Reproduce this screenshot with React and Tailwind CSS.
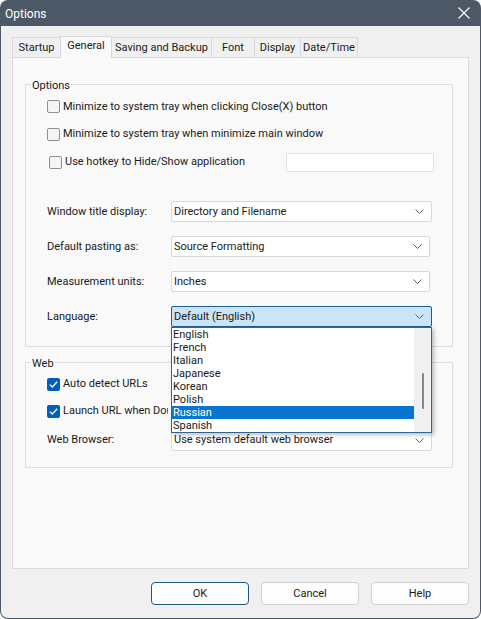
import React from "react"

const languages = ["English", "French", "Italian", "Japanese", "Korean", "Polish", "Russian", "Spanish"]

const tabs = [
    { name: "Startup", w: "w-[48px]" },
    { name: "General", w: "w-[51px]", active: true },
    { name: "Saving and Backup", w: "w-[100px]" },
    { name: "Font", w: "w-[43px]" },
    { name: "Display", w: "w-[46px]" },
    { name: "Date/Time", w: "w-[58px]", last: true },
]

function Chevron() {
    return (
        <svg width="9" height="5" viewBox="0 0 9 5" className="shrink-0">
            <path d="M0.5 0.5 L4.5 4.5 L8.5 0.5" fill="none" stroke="#606060" strokeWidth="1" />
        </svg>
    )
}

function Checkbox({ checked = false }) {
    if (checked) {
        return (
            <div className="w-[13px] h-[13px] rounded-[2px] bg-[#005fb8] flex items-center justify-center shrink-0">
                <svg width="9" height="7" viewBox="0 0 9 7">
                    <path d="M0.8 3.6 L3.3 6 L8.2 0.8" fill="none" stroke="white" strokeWidth="1.3" />
                </svg>
            </div>
        )
    }
    return <div className="w-[13px] h-[13px] rounded-[2px] border border-[#8f8f8f] bg-[#f4f4f4] shrink-0" />
}

function CheckRow({ label, checked, h, indent = "ml-[21px]", clip = "" }) {
    return (
        <div className={`${h} flex items-center ${indent}`}>
            <Checkbox checked={checked} />
            <span className={`ml-[3px] pt-px whitespace-nowrap ${clip}`}>{label}</span>
        </div>
    )
}

function Select({ value, w = "w-[261px]", active = false }) {
    return (
        <div className={`${w} h-[21px] flex items-center justify-between pl-[2px] pr-[7px] border rounded-[2px] ${active ? "bg-[#cce4f7] border-[#1c5e94]" : "bg-white border-[#d9d9d9]"}`}>
            <span className="pt-px">{value}</span>
            <Chevron />
        </div>
    )
}

function FieldRow({ label, h = "h-[35px]", children }) {
    return (
        <div className={`${h} flex items-center ml-[21px]`}>
            <span className="w-[124px] pt-px shrink-0">{label}</span>
            {children}
        </div>
    )
}

function Group({ title, className = "", children }) {
    return (
        <div className={`border border-[#dcdcdc] ml-[12px] mr-[15px] ${className}`}>
            <div className="-mt-[8px] ml-[5px] w-fit px-[1px] h-[16px] leading-[17px] bg-[#f9f9f9]">{title}</div>
            {children}
        </div>
    )
}

function LanguageList() {
    return (
        <div className="absolute left-0 top-full w-[261px] h-[106px] bg-white border border-[#2f6592] shadow-[2px_2px_4px_rgba(0,0,0,0.25)] flex z-10">
            <div className="flex-1 flex flex-col">
                {languages.map(lang => (
                    <div key={lang} className={`h-[13px] leading-[14px] pl-[1px] ${lang === "Russian" ? "bg-[#0a74d2] text-white" : ""}`}>
                        {lang}
                    </div>
                ))}
            </div>
            <div className="w-[17px] bg-[#f0f0f0] flex justify-center pt-[45px] pl-[1px]">
                <div className="w-[2px] h-[36px] rounded-full bg-[#858585]" />
            </div>
        </div>
    )
}

function Button({ name, focused = false }) {
    return (
        <div className={`w-[98px] h-[23px] pt-px flex items-center justify-center rounded-[4px] bg-[#fdfdfd] border ${focused ? "border-[#1b5a86]" : "border-[#d0d0d0]"}`}>
            {name}
        </div>
    )
}

export default function App() {
    return (
        <div className="w-[481px] h-[619px] bg-white font-['Roboto',sans-serif] text-[11px] text-[#1a1a1a]">
            <div className="w-full h-full rounded-[8px] overflow-hidden bg-[#4c5866] px-[1px] pb-[1px] flex flex-col">
                {/* title bar */}
                <div className="h-[26px] shrink-0 flex items-center justify-between pl-[4px] pr-[10px] text-white text-[12px]">
                    <span className="pt-px">Options</span>
                    <svg width="12" height="12" viewBox="0 0 12 12">
                        <path d="M0.5 0.5 L11.5 11.5 M11.5 0.5 L0.5 11.5" stroke="white" strokeWidth="1.1" />
                    </svg>
                </div>

                <div className="flex-1 bg-[#f0f0f0] rounded-b-[7px] pt-[10px] px-[11px]">
                    {/* tab strip */}
                    <div className="h-[22px] flex items-end -mb-px relative z-10">
                        {tabs.map(t => (
                            <div
                                key={t.name}
                                className={`${t.w} whitespace-nowrap flex items-center justify-center border-[#d9d9d9] border-t border-l ${t.last ? "border-r" : ""} ${t.active ? "h-[22px] bg-[#f9f9f9] pb-[2px]" : "h-[21px] bg-[#f0f0f0] border-b pt-[2px]"}`}
                            >
                                {t.name}
                            </div>
                        ))}
                    </div>

                    {/* general page */}
                    <div className="h-[512px] border border-[#dcdcdc] bg-[#f9f9f9] pt-[26px]">
                        <Group title="Options" className="pb-[12px]">
                            <CheckRow label="Minimize to system tray when clicking Close(X) button" h="h-[27px]" />
                            <CheckRow label="Minimize to system tray when minimize main window" h="h-[28px]" />
                            <div className="h-[28px] flex items-center">
                                <CheckRow label="Use hotkey to Hide/Show application" h="h-[28px] w-[237px]" indent="ml-[23px]" />
                                <div className="w-[148px] h-[19px] bg-white border border-[#e3e3e3]" />
                            </div>
                            <div className="h-[18px]" />
                            <FieldRow label="Window title display:">
                                <Select value="Directory and Filename" />
                            </FieldRow>
                            <FieldRow label="Default pasting as:">
                                <Select value="Source Formatting" w="w-[259px]" />
                            </FieldRow>
                            <FieldRow label="Measurement units:">
                                <Select value="Inches" w="w-[259px]" />
                            </FieldRow>
                            <FieldRow label="Language:">
                                <div className="relative">
                                    <Select value="Default (English)" active />
                                    <LanguageList />
                                </div>
                            </FieldRow>
                        </Group>

                        <Group title="Web" className="mt-[15px] pb-[12px]">
                            <CheckRow label="Auto detect URLs" checked h="h-[26px]" />
                            <CheckRow label="Launch URL when Double-clicking" checked h="h-[28px]" clip="w-[105px] overflow-hidden" />
                            <FieldRow label="Web Browser:" h="h-[30px]">
                                <Select value="Use system default web browser" />
                            </FieldRow>
                        </Group>
                    </div>

                    {/* dialog buttons */}
                    <div className="mt-[13px] flex justify-end gap-[12px]">
                        <Button name="OK" focused />
                        <Button name="Cancel" />
                        <Button name="Help" />
                    </div>
                </div>
            </div>
        </div>
    )
}
